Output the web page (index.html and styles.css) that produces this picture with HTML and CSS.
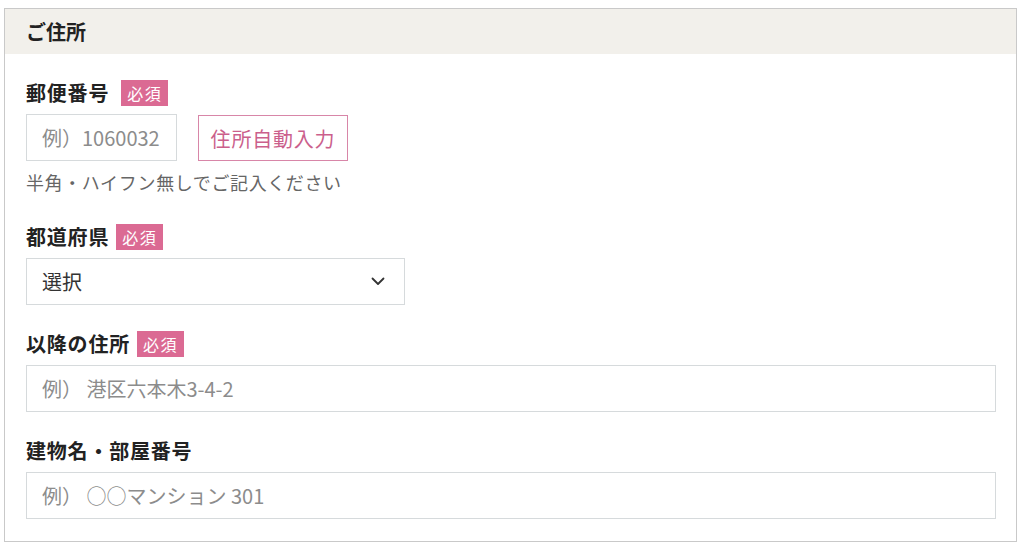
FILE: index.html
```html
<!DOCTYPE html>
<html lang="ja">
<head>
<meta charset="utf-8">
<link rel="stylesheet" href="styles.css">
</head>
<body>
<section class="panel">
  <h2 class="panel-head">ご住所</h2>
  <div class="panel-body">
    <div class="field">
      <div class="label-row"><span class="label label-wide">郵便番号</span><span class="badge">必須</span></div>
      <div class="zip-row">
        <input class="input input-zip" type="text" placeholder="例）1060032">
        <button class="btn-auto" type="button">住所自動入力</button>
      </div>
      <p class="hint">半角・ハイフン無しでご記入ください</p>
    </div>
    <div class="field">
      <div class="label-row"><span class="label">都道府県</span><span class="badge">必須</span></div>
      <div class="select-wrap">
        <select class="select"><option>選択</option></select>
        <svg class="chev" width="14" height="9" viewBox="0 0 14 9"><path d="M1.5 1.5 L7 7 L12.5 1.5" fill="none" stroke="#333" stroke-width="1.8" stroke-linecap="round" stroke-linejoin="round"/></svg>
      </div>
    </div>
    <div class="field">
      <div class="label-row"><span class="label">以降の住所</span><span class="badge">必須</span></div>
      <input class="input input-full" type="text" placeholder="例） 港区六本木3-4-2">
    </div>
    <div class="field">
      <div class="label-row"><span class="label">建物名・部屋番号</span></div>
      <input class="input input-full" type="text" placeholder="例） ○○マンション 301">
    </div>
  </div>
</section>
</body>
</html>
```

FILE: styles.css
```css
* { box-sizing: border-box; }
html, body { margin: 0; padding: 0; background: #fff; }
body {
  font-family: "Noto Sans CJK JP", "Noto Sans", sans-serif;
  color: #222;
}
.panel {
  margin: 8px 0 0 4px;
  width: 1013px;
  border: 1px solid #c9c9c9;
  background: #fff;
}
.panel-head {
  margin: 0;
  height: 45px;
  background: #f2f0eb;
  padding: 0 0 0 21px;
  font-size: 20px;
  font-weight: 700;
  line-height: 45px;
  color: #222;
}
.panel-body {
  padding: 26px 20px 22px 21px;
  display: flex;
  flex-direction: column;
  gap: 26px;
}
.field { display: flex; flex-direction: column; }
.label-row {
  display: flex;
  align-items: center;
  height: 26px;
  margin-bottom: 8px;
}
.label {
  font-size: 20px;
  font-weight: 700;
  letter-spacing: 0.8px;
  line-height: 26px;
  color: #222;
}
.label-wide { margin-right: 5px; }
.badge {
  margin-left: 7px;
  width: 47px;
  height: 26px;
  display: inline-flex;
  align-items: center;
  justify-content: center;
  background: #db6a93;
  color: #fff;
  font-size: 16px;
  letter-spacing: 1.5px;
  line-height: 1;
}
.input {
  height: 47px;
  border: 1px solid #d6dadc;
  border-radius: 0;
  padding: 0 0 0 15px;
  font-family: "Noto Sans CJK JP", "Noto Sans", sans-serif;
  font-size: 20px;
  color: #333;
  background: #fff;
  outline: none;
}
.input::placeholder { color: #8c8c8c; }
.input-zip { width: 151px; }
.input-full { width: 970px; }
.zip-row {
  display: flex;
  align-items: flex-end;
  gap: 21px;
}
.btn-auto {
  width: 150px;
  height: 46px;
  border: 1.5px solid #d886a8;
  background: #fff;
  color: #cb5f8c;
  font-family: "Noto Sans CJK JP", "Noto Sans", sans-serif;
  font-size: 20px;
  letter-spacing: 0.8px;
  padding: 0;
}
.hint {
  margin: 9px 0 4px;
  font-size: 18px;
  line-height: 24px;
  letter-spacing: 0.6px;
  color: #666;
}
.select-wrap {
  position: relative;
  width: 379px;
  height: 47px;
}
.select {
  appearance: none;
  -webkit-appearance: none;
  width: 379px;
  height: 47px;
  border: 1px solid #d6dadc;
  border-radius: 0;
  background: #fff;
  padding: 0 0 0 15px;
  font-family: "Noto Sans CJK JP", "Noto Sans", sans-serif;
  font-size: 20px;
  color: #333;
  outline: none;
}
.chev {
  position: absolute;
  left: 345px;
  top: 19px;
  pointer-events: none;
}
```
